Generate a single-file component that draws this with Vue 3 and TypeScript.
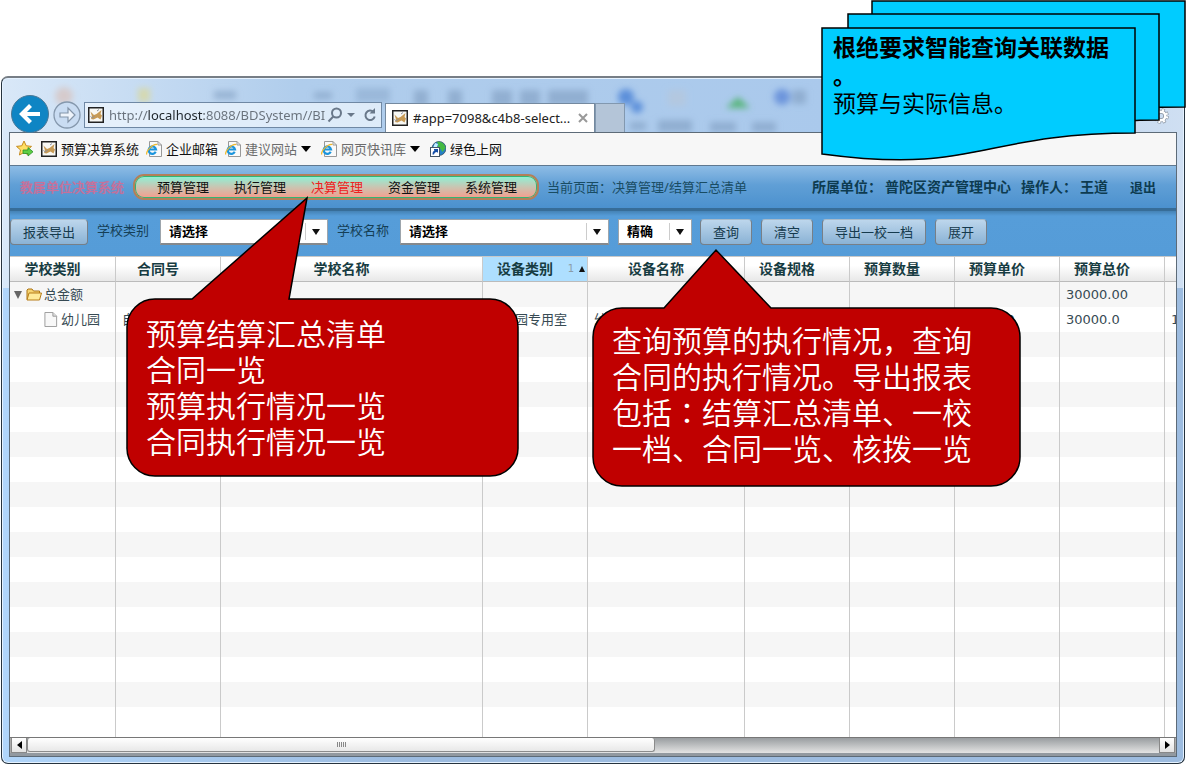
<script setup lang="ts">
import { ref } from 'vue'

interface Row {
  kind: 'folder' | 'file' | 'empty'
  cells: string[]
}

const address = ref('http://localhost:8088/BDSystem//BI')
const navItems = ['预算管理', '执行管理', '决算管理', '资金管理', '系统管理']
const current = ref('决算管理')
const schoolType = ref('请选择')
const schoolName = ref('请选择')
const matchMode = ref('精确')

const bookmarks = [
  { icon: 'app', label: '预算决算系统', muted: false, menu: false },
  { icon: 'ie', label: '企业邮箱', muted: false, menu: false },
  { icon: 'ie', label: '建议网站', muted: true, menu: true },
  { icon: 'ie', label: '网页快讯库', muted: true, menu: true },
  { icon: 'globe', label: '绿色上网', muted: false, menu: false },
]

const columns = ['学校类别', '合同号', '学校名称', '设备类别', '设备名称', '设备规格', '预算数量', '预算单价', '预算总价', '']

const rows: Row[] = [
  { kind: 'folder', cells: ['总金额', '', '', '', '', '', '', '', '30000.00', ''] },
  { kind: 'file', cells: ['幼儿园', '自', '', '幼儿园专用室', '幼', '', '', '30000.0', '30000.0', '1'] },
  ...Array.from({ length: 16 }, (): Row => ({ kind: 'empty', cells: Array(10).fill('') })),
]
</script>

<template>
  <div class="page">
    <main class="window">
      <div class="titlebar">
        <svg class="glass" viewBox="0 0 1182 55" preserveAspectRatio="xMinYMin slice" aria-hidden="true">
          <defs><filter id="soft" x="-10%" y="-30%" width="120%" height="160%"><feGaussianBlur stdDeviation="3" /></filter></defs>
          <g filter="url(#soft)">
            <g fill="#7f9dc0" opacity=".6">
              <rect x="212" y="13" width="22" height="8" /><rect x="312" y="14" width="18" height="7" />
              <rect x="354" y="10" width="34" height="14" opacity=".7" /><rect x="412" y="12" width="14" height="16" />
              <rect x="446" y="12" width="14" height="16" /><rect x="490" y="12" width="20" height="16" />
              <rect x="518" y="12" width="20" height="16" /><rect x="546" y="12" width="40" height="15" />
              <rect x="628" y="44" width="16" height="8" /><rect x="656" y="42" width="34" height="12" />
              <rect x="708" y="44" width="26" height="10" /><rect x="750" y="44" width="24" height="10" />
              <rect x="790" y="12" width="14" height="14" />
            </g>
            <circle cx="62" cy="18" r="9" fill="#d6cbcc" /><rect x="136" y="10" width="12" height="14" fill="#d5d9b0" />
            <circle cx="624" cy="19" r="8" fill="#5b8fda" /><circle cx="635" cy="29" r="6" fill="#5b8fda" />
            <circle cx="780" cy="19" r="8" fill="#6d95dc" /><rect x="666" y="12" width="18" height="16" fill="#b3c8e0" />
            <path d="M724 30l12-11 12 11z" fill="#58b57c" />
          </g>
        </svg>
        <button class="nav-back" aria-label="后退">
          <svg viewBox="0 0 38 38"><circle cx="19" cy="19" r="18.5" fill="#0f85c4" stroke="#4b7896" /><path d="M29 19H11M19.500 10.500L11 19l8.500 8.500" fill="none" stroke="#fff" stroke-width="4.200" /></svg>
        </button>
        <button class="nav-forward" aria-label="前进">
          <svg viewBox="0 0 28 28"><circle cx="14" cy="14" r="13" fill="#c9dcf2" stroke="#8598ad" stroke-width="1.300" /><path d="M7 12h8V7l7 7-7 7v-5H7z" fill="#eef4fb" stroke="#8495a9" stroke-width="1.200" /></svg>
        </button>
        <div class="address">
          <svg class="icon" viewBox="0 0 16 16"><rect x=".75" y=".75" width="14.500" height="14.500" fill="#f8f8f4" stroke="#222" stroke-width="1.500" /><path d="M2.500 4.500l3.500 3.500 2.500-1 5-4-1 4 1.500 1.500-1.500 4-3-2-4 2-2.500-.5 1-2.500z" fill="#c79a55" /><path d="M2.500 9.500l2 1.500 2-2M9 4l2-1.500" fill="none" stroke="#8a8f9c" /></svg>
          <input v-model="address" aria-label="地址" />
          <button class="tool" aria-label="搜索"><svg viewBox="0 0 16 16"><circle cx="9.500" cy="6" r="4.500" /><path d="M6.300 9.500L1.500 14.500" /></svg></button>
          <span class="small-arrow"></span>
          <button class="tool" aria-label="刷新"><svg viewBox="0 0 16 16"><path d="M11.500 5A4.700 4.700 0 1 0 12.700 9.500" /><path d="M13 1v5.500H7.500z" fill="#69788a" stroke="none" /></svg></button>
        </div>
        <div class="tab">
          <svg class="icon" viewBox="0 0 16 16"><rect x=".75" y=".75" width="14.500" height="14.500" fill="#f8f8f4" stroke="#222" stroke-width="1.500" /><path d="M2.500 4.500l3.500 3.500 2.500-1 5-4-1 4 1.500 1.500-1.500 4-3-2-4 2-2.500-.5 1-2.500z" fill="#c79a55" /><path d="M2.500 9.500l2 1.500 2-2M9 4l2-1.500" fill="none" stroke="#8a8f9c" /></svg>
          <span>#app=7098&amp;c4b8-select...</span>
          <button class="close" aria-label="关闭标签页"><svg viewBox="0 0 10 10"><path d="M1 1l8 8M9 1L1 9" /></svg></button>
        </div>
        <button class="new-tab" aria-label="新建标签页"></button>
        <button class="gear" aria-label="工具">
          <svg viewBox="0 0 18 18"><circle cx="9" cy="9" r="6.800" fill="none" stroke="#8a95a3" stroke-width="4" stroke-dasharray="3.200 2.140" /><circle cx="9" cy="9" r="4.800" fill="none" stroke="#8a95a3" stroke-width="4.500" /><circle cx="9" cy="9" r="6.800" fill="none" stroke="#fff" stroke-width="2.600" stroke-dasharray="2.200 3.140" stroke-dashoffset="-.5" /><circle cx="9" cy="9" r="4.800" fill="none" stroke="#fff" stroke-width="2.800" /></svg>
        </button>
      </div>

      <div class="content">
        <nav class="bookmarks" aria-label="收藏夹">
          <button class="star" aria-label="添加到收藏夹">
            <svg viewBox="0 0 18 18"><path d="M8 1l2.200 4.800 5.300.6-4 3.500 1.100 5.100L8 12.500 3.400 15l1.100-5.100-4-3.500 5.300-.6z" fill="#ffdf63" stroke="#c68b20" /><path d="M7 10h5V7.500l5 4.300-5 4.200v-2.500H7z" fill="#5fce45" stroke="#2a922a" stroke-width=".8" /></svg>
          </button>
          <a v-for="item in bookmarks" :key="item.label" href="#" :class="{ muted: item.muted, menu: item.menu }">
            <svg v-if="item.icon === 'app'" class="icon" viewBox="0 0 16 16"><rect x=".75" y=".75" width="14.500" height="14.500" fill="#f8f8f4" stroke="#222" stroke-width="1.500" /><path d="M2.500 4.500l3.500 3.500 2.500-1 5-4-1 4 1.500 1.500-1.500 4-3-2-4 2-2.500-.5 1-2.500z" fill="#c79a55" /><path d="M2.500 9.500l2 1.500 2-2M9 4l2-1.500" fill="none" stroke="#8a8f9c" /></svg>
            <svg v-else-if="item.icon === 'ie'" class="icon" viewBox="0 0 16 16"><path d="M3.500.5H12l3.500 3.500v11.500h-12z" fill="#fafafa" stroke="#999" /><path d="M12 .5V4h3.500" fill="none" stroke="#999" /><path d="M9.700 10.800A3.700 3.700 0 1 1 10 8.500H3.500" fill="none" stroke="#1c95dd" stroke-width="2.200" /><path d="M.8 13.500C-.5 10 7 2.500 11.300 3.600" fill="none" stroke="#f1b92c" stroke-width="1.200" /></svg>
            <svg v-else class="icon" viewBox="0 0 16 16"><circle cx="9" cy="7.500" r="7" fill="#2480c5" stroke="#345" stroke-width=".7" /><path d="M7 1c4-1 8 2 8.500 6l-3 4-2-3-4-1 2-3z" fill="#45ba43" /><path d="M5 2l3 1-1 3-4 1z" fill="#c9efff" /><rect x=".5" y="6.500" width="9" height="9" fill="#fff" stroke="#456" /><path d="M2.500 13.500c0-3 1-4 3-4H4V8h4v4l-1-1c-2 0-2.500 1-3 2.500z" fill="#164fa8" /></svg>
            <span>{{ item.label }}</span>
            <i v-if="item.menu" class="menu-arrow"></i>
          </a>
        </nav>

        <header class="app-header">
          <strong class="brand">教属单位决算系统</strong>
          <nav class="pill" aria-label="主菜单">
            <a v-for="item in navItems" :key="item" href="#" :class="{ active: item === current }" @click.prevent="current = item">{{ item }}</a>
          </nav>
          <span class="crumb">当前页面：决算管理/结算汇总清单</span>
          <div class="account"><span class="unit">所属单位：</span><span class="unit-name">普陀区资产管理中心</span><span class="operator">操作人：</span><span>王道</span></div>
          <a class="logout" href="#">退出</a>
        </header>

        <form class="toolbar" @submit.prevent>
          <button type="button" class="btn">报表导出</button>
          <label for="school-type">学校类别</label>
          <span class="combo type-combo"><select id="school-type" v-model="schoolType"><option>请选择</option></select></span>
          <label for="school-name">学校名称</label>
          <span class="combo name-combo"><select id="school-name" v-model="schoolName"><option>请选择</option></select></span>
          <span class="combo mode-combo"><select v-model="matchMode" aria-label="匹配方式"><option>精确</option></select></span>
          <button class="btn">查询</button>
          <button type="reset" class="btn">清空</button>
          <button type="button" class="btn">导出一校一档</button>
          <button type="button" class="btn">展开</button>
        </form>

        <div class="grid">
          <table>
            <colgroup><col class="c-tree" /><col class="c" /><col class="c-name" /><col class="c" /><col class="c-device" /><col class="c" /><col class="c" /><col class="c" /><col class="c" /><col /></colgroup>
            <thead>
              <tr>
                <th v-for="(column, index) in columns" :key="index" scope="col" :class="{ sorted: index === 3 }">
                  {{ column }}<span v-if="index === 3" class="sort">1<i></i></span>
                </th>
              </tr>
            </thead>
            <tbody>
              <tr v-for="(row, r) in rows" :key="r">
                <td v-for="(cell, c) in row.cells" :key="c">
                  <div v-if="c === 0 && row.kind !== 'empty'" class="tree" :class="row.kind">
                    <i v-if="row.kind === 'folder'" class="twist"></i>
                    <svg v-if="row.kind === 'folder'" viewBox="0 0 16 14"><path d="M1 12V2.500l1-1h4l1.500 2h6V6" fill="#f6d472" stroke="#ac7415" /><path d="M1 12.500L3 5.500h12.500l-2 7z" fill="#ffeb9a" stroke="#b77c18" /></svg>
                    <svg v-else viewBox="0 0 14 16"><path d="M.5.5h8.500l4 4v11H.5z" fill="#f8f8f8" stroke="#999" /><path d="M9 .5v4h4" fill="#ddd" stroke="#999" /></svg>
                    <span>{{ cell }}</span>
                  </div>
                  <template v-else>{{ cell }}</template>
                </td>
              </tr>
            </tbody>
          </table>
        </div>

        <div class="scrollbar">
          <button class="end left" aria-label="向左滚动"><i></i></button>
          <div class="track"><div class="thumb"><i></i><i></i><i></i><i></i><i></i></div></div>
          <button class="end right" aria-label="向右滚动"><i></i></button>
        </div>
      </div>
    </main>

    <aside class="callout menu-callout">
      <svg viewBox="0 0 394 282"><path d="M29 103H66L181 2 163 103H364A28 28 0 0 1 392 131V251A28 28 0 0 1 364 280H29A28 28 0 0 1 1 251V131A28 28 0 0 1 29 103Z" /></svg>
      <p>预算结算汇总清单<br />合同一览<br />预算执行情况一览<br />合同执行情况一览</p>
    </aside>

    <aside class="callout query-callout">
      <svg viewBox="0 0 430 240"><path d="M30 60H72L124 2 179 60H399A29 29 0 0 1 428 89V209A29 29 0 0 1 399 238H30A29 29 0 0 1 1 209V89A29 29 0 0 1 30 60Z" /></svg>
      <p>查询预算的执行情况，查询<br />合同的执行情况。导出报表<br />包括<span class="mid">：</span>结算汇总清单、一校<br />一档、合同一览、核拨一览</p>
    </aside>

    <aside class="note">
      <svg viewBox="0 0 365 162"><path d="M51 1H364V107C300 107 250 110 220 125L51 125Z" /><path d="M27 14H338V120C280 120 230 130 200 136L27 136Z" /><path d="M1 28H314V133C158 133 158 175 1 154Z" /></svg>
      <p><strong>根绝要求智能查询关联数据<br />。</strong><br />预算与实际信息。</p>
    </aside>
  </div>
</template>

<style>
body { margin: 0; background: #fff; }
</style>

<style scoped>
* { box-sizing: border-box; }
.page { position: relative; display: flex; min-height: 100vh; padding: 76px 1px 1px; font: 13px/18px "Noto Sans", "Noto Sans CJK SC", sans-serif; color: #173746; }
button, input, select { font: inherit; color: inherit; padding: 0; margin: 0; border: 0; background: none; }
a { color: inherit; text-decoration: none; }
svg { display: block; }
.window { flex: 1; min-width: 0; display: flex; flex-direction: column; border: 1px solid #26333e; border-top: 2px solid #777e86; border-radius: 7px; background: linear-gradient(90deg, #d9e8f8 0, #b0cdec 25%, #aac9ec 70%, #cfdff2 100%) 0 0 / 100% 210px no-repeat, linear-gradient(90deg, #b0d5fa, #9dbce0 35%, #9dbce0); box-shadow: inset 0 0 0 1px #e5f2ff; }
.titlebar { position: relative; display: flex; align-items: flex-end; height: 54px; padding-left: 9px; }
.glass { position: absolute; inset: 0; width: 100%; height: 100%; }
.titlebar > :not(.glass) { position: relative; }
.nav-back { width: 38px; height: 38px; margin-bottom: -1px; }
.nav-forward { width: 28px; height: 28px; margin: 0 3px 3px 4px; }
.address { display: flex; align-items: center; width: 298px; height: 26px; margin-bottom: 4px; padding: 0 3px; border: 1px solid #6f88a4; background: rgba(237, 245, 254, .75); }
.icon { flex: none; width: 16px; height: 16px; }
.address input { flex: 1; min-width: 0; margin-left: 5px; outline: 0; color: transparent; background: linear-gradient(90deg, #68717b 38px, #1e252b 38px, #1e252b 95px, #68717b 95px); background-clip: text; -webkit-background-clip: text; }
.tool { width: 16px; height: 16px; }
.tool svg { fill: none; stroke: #69788a; stroke-width: 2; }
.small-arrow { margin: 0 7px 0 4px; border: 4px solid transparent; border-top-color: #69788a; border-bottom: 0; }
.tab { display: flex; align-items: center; width: 210px; height: 29px; margin-left: 3px; padding: 0 6px; border: 1px solid #74899f; border-bottom: 0; background: #fff; color: #222; }
.tab span { flex: 1; margin-left: 5px; white-space: nowrap; }
.close { width: 10px; height: 10px; }
.close svg { stroke: #999; stroke-width: 2; }
.new-tab { width: 30px; height: 29px; border: 1px solid #8298af; border-bottom: 0; background: #b4c5d8; }
.gear { width: 16px; height: 16px; margin: 0 15px 8px auto; }
.content { flex: 1; min-width: 0; display: flex; flex-direction: column; margin: 0 7px 6px; border: 1px solid #5d6b78; background: #fff; }
.bookmarks { display: flex; align-items: center; gap: 7px; height: 32px; padding-left: 6px; background: #f7f7f7; color: #111; }
.bookmarks a { display: flex; align-items: center; gap: 4px; white-space: nowrap; }
.bookmarks a.muted { color: #6c6c6c; }
.bookmarks a.menu { margin-right: 3px; }
.star { width: 18px; height: 18px; }
.menu-arrow { border: 5px solid transparent; border-top: 6px solid #000; border-bottom: 0; }
.app-header { display: flex; align-items: center; height: 46px; padding: 0 20px 1px 10px; border-top: 1px solid #5f7890; border-bottom: 3px solid #376d98; background: linear-gradient(#8ebce5, #609fd6 45%, #4b91ce); white-space: nowrap; }
.brand { width: 113px; color: #c9719b; font-weight: 400; text-shadow: 0 0 1px #d95f86; }
.pill { display: flex; align-items: center; gap: 25px; height: 26px; padding: 0 20px 0 22px; border: 2px solid #b28059; border-radius: 11px; background: linear-gradient(#8cf3d7, #c9c5b2 50%, #f69c8c); box-shadow: inset 0 0 0 1px #34b574; color: #111; }
.pill .active { color: #ef2020; }
.crumb { margin-left: 8px; color: #194c63; }
.account { display: flex; margin-left: auto; font-size: 14px; font-weight: 700; color: #0d3b50; }
.unit-name { margin: 0 10px 0 3px; }
.operator { margin-right: 3px; }
.logout { margin-left: 22px; font-weight: 700; color: #0d3b50; }
.toolbar { display: flex; align-items: center; height: 45px; padding-bottom: 4px; background: linear-gradient(#4482b5, #569dd9 5px, #559cd8); white-space: nowrap; }
.btn { height: 26px; padding: 0 12px; margin-right: 9px; border: 1px solid #777f87; border-top-color: #a8bac9; border-radius: 4px; background: linear-gradient(#bdd6ec, #8ab2d5); color: #153a4d; }
.toolbar label { margin: 0 11px 4px 0; color: #153f56; }
.combo { position: relative; height: 26px; margin-right: 9px; border: 1px solid #9da5ac; border-bottom: 2px solid #85898d; background: #fff; color: #000; }
.combo::before { content: ""; position: absolute; top: 3px; bottom: 3px; right: 21px; border-left: 1px solid #ccc; }
.combo::after { content: ""; position: absolute; right: 7px; top: 9px; border: 4px solid transparent; border-top: 6px solid #111; border-bottom: 0; pointer-events: none; }
.combo select { width: 100%; height: 100%; padding: 0 24px 0 8px; appearance: none; font-weight: 700; }
.type-combo { width: 168px; }
.name-combo { width: 209px; }
.mode-combo { width: 74px; margin-right: 8px; }
.grid { flex: 1; display: flex; min-height: 0; overflow: hidden; border-top: 1px solid #c8c8c8; }
table { width: 100%; height: 100%; min-height: 480px; table-layout: fixed; border-collapse: separate; border-spacing: 0; background: #fff; }
.c-tree { width: 106px; }
.c { width: 105px; }
.c-name { width: 262px; }
.c-device { width: 157px; }
thead tr, tbody tr { height: 25px; }
tbody tr:last-child { height: auto; }
th, td { padding: 0; border-right: 1px solid #cacaca; overflow: hidden; white-space: nowrap; }
th:last-child, td:last-child { border-right: 0; }
th { position: relative; padding-right: 20px; border-bottom: 1px solid #bbb; background: linear-gradient(#fff 35%, #e8e8e8); font-size: 14px; font-weight: 700; color: #173c42; }
th.sorted { background: #aedfff; }
.sort { position: absolute; right: 2px; top: 3px; display: flex; align-items: center; gap: 5px; font: 10px/18px "DejaVu Sans", sans-serif; color: #8b9ca8; }
.sort i { border: 3px solid transparent; border-bottom: 6px solid #111; border-top: 0; }
td { padding-left: 6px; line-height: 20px; font-family: "DejaVu Sans", "Noto Sans CJK SC", sans-serif; color: #374a53; }
tbody tr:nth-child(odd) td { background: #f6f6f6; }
.tree { display: flex; align-items: center; gap: 2px; margin-left: -2px; }
.tree svg { width: 16px; height: 15px; }
.tree.file { padding-left: 29px; }
.twist { margin-right: 2px; border: 4px solid transparent; border-top: 8px solid #666; border-bottom: 0; }
.scrollbar { display: flex; height: 19px; padding: 0 1px; border-top: 1px solid #777; border-bottom: 3px solid #9299a0; background: #aaa; }
.end { display: flex; align-items: center; justify-content: center; width: 16px; height: 15px; border: 1px solid #888; border-top: 0; background: linear-gradient(#fff, #e3e3e3); }
.end i { border: 4px solid transparent; }
.left i { border-right: 5px solid #000; border-left: 0; }
.right i { border-left: 5px solid #000; border-right: 0; }
.track { flex: 1; background: linear-gradient(#999da0, #e4e4e4); }
.thumb { display: flex; align-items: center; justify-content: center; gap: 1px; width: 55.5%; height: 14px; border: 1px solid #8b8b8b; border-top: 0; border-radius: 3px; background: linear-gradient(#fff, #e8e8e8); }
.thumb i { width: 1px; height: 5px; background: #888; }
.callout, .note { position: absolute; }
.callout svg, .note svg { position: absolute; inset: 0; width: 100%; height: 100%; stroke: #000; stroke-width: 1.5; }
.callout svg { fill: #c00000; }
.callout p, .note p { position: relative; margin: 0; white-space: nowrap; }
.callout p { font: 30px/36px "Noto Sans CJK SC", sans-serif; font-weight: 350; color: #fff; }
.mid { font-family: "Noto Sans CJK TC", sans-serif; }
.menu-callout { left: 126px; top: 196px; width: 394px; height: 282px; padding: 118px 0 0 20px; }
.query-callout { left: 592px; top: 248px; width: 430px; height: 240px; padding: 73px 0 0 20px; }
.note { left: 821px; top: 0; width: 365px; height: 162px; padding: 32px 0 0 12px; color: #000; }
.note svg { fill: #00ccff; }
.note p { font: 23px/28px "Noto Sans CJK SC", sans-serif; }
</style>
